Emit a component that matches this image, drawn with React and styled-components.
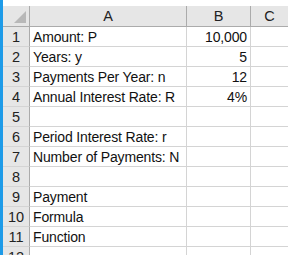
import React from 'react'
import styled, { createGlobalStyle } from 'styled-components'

const Global = createGlobalStyle`
  html, body { margin: 0; padding: 0; background: #fff; overflow: hidden; }
  body { font-family: "Liberation Sans", Arial, sans-serif; }
`

const Page = styled.div`
  display: flex;
  width: 288px;
  height: 255px;
  overflow: hidden;
`

const Strip = styled.div`
  width: 3px;
  flex: none;
  background: #1e9be8;
`

const Sheet = styled.div`
  padding-top: 6px;
  flex: 1;
`

const Grid = styled.div`
  display: grid;
  grid-template-columns: 27px 157px 64px 38px;
  grid-template-rows: 21px;
  grid-auto-rows: 20px;
`

const Cell = styled.div`
  box-sizing: border-box;
  border-right: 1px solid #d4d4d4;
  border-bottom: 1px solid #d4d4d4;
  font-size: 14px;
  letter-spacing: -0.15px;
  color: #111;
  padding: 1px 3px 0;
  display: flex;
  align-items: center;
  justify-content: ${p => (p.$right ? 'flex-end' : 'flex-start')};
  white-space: nowrap;
`

const Head = styled.div`
  box-sizing: border-box;
  background: #e6e6e6;
  border-right: 1px solid #ababab;
  border-bottom: 1px solid #ababab;
  font-size: 14.5px;
  color: #222;
  display: flex;
  align-items: center;
  justify-content: center;
  position: relative;
  overflow: hidden;
`

const RowHead = styled(Head)`
  border-bottom-color: #d4d4d4;
  padding-top: 1px;
`

const Corner = styled(Head)`
  &::after {
    content: '';
    position: absolute;
    right: 3px;
    bottom: 3px;
    border-left: 12px solid transparent;
    border-bottom: 12px solid #b8b8b8;
  }
`

const rows = [
  ['Amount: P', '10,000'],
  ['Years: y', '5'],
  ['Payments Per Year: n', '12'],
  ['Annual Interest Rate: R', '4%'],
  ['', ''],
  ['Period Interest Rate: r', ''],
  ['Number of Payments: N', ''],
  ['', ''],
  ['Payment', ''],
  ['Formula', ''],
  ['Function', ''],
  ['', ''],
]

export default function App() {
  return (
    <Page>
      <Global />
      <Strip />
      <Sheet>
        <Grid>
          <Corner />
          <Head>A</Head>
          <Head>B</Head>
          <Head>C</Head>
          {rows.map((r, i) => (
            <React.Fragment key={i}>
              <RowHead>{i + 1}</RowHead>
              <Cell>{r[0]}</Cell>
              <Cell $right>{r[1]}</Cell>
              <Cell />
            </React.Fragment>
          ))}
        </Grid>
      </Sheet>
    </Page>
  )
}
